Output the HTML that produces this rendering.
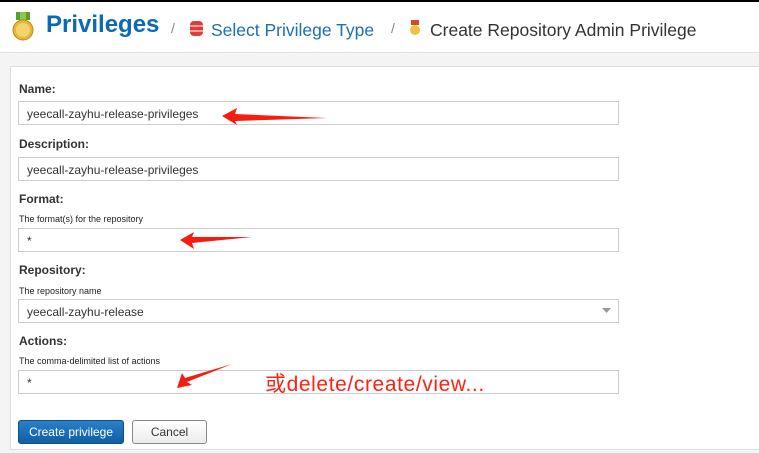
<!DOCTYPE html>
<html><head><meta charset="utf-8"><style>
body{margin:0;width:759px;height:453px;overflow:hidden;background:#f4f4f4;font-family:"Liberation Sans",sans-serif;position:relative}
.hdr{position:absolute;left:0;top:0;width:759px;height:53px;background:#fff;border-top:2px solid #000;box-sizing:border-box;border-bottom:1px solid #ddd}
.a{position:absolute;white-space:nowrap}
.panel{position:absolute;left:10px;top:66px;width:760px;height:384px;background:#fff;border:1px solid #ddd;box-sizing:border-box}
.lbl{position:absolute;left:19px;font-size:12px;font-weight:bold;color:#333}
.help{position:absolute;left:19px;font-size:9px;color:#222}
.in{position:absolute;left:18px;width:601px;height:24px;border:1px solid #ccc;box-sizing:border-box;font-size:12px;color:#333;padding:5px 0 0 8px}
.btn{position:absolute;top:420px;height:24px;box-sizing:border-box;border-radius:3px;font-size:12px;text-align:center;line-height:22px}
</style></head><body>
<div class="hdr"></div>
<svg class="a" style="left:10px;top:10px" width="26" height="32" viewBox="0 0 26 32"><rect x="6" y="2" width="14" height="8" fill="#5a9e2a"/><rect x="10" y="2" width="6" height="8" fill="#8cc850"/><circle cx="13" cy="20" r="10" fill="#e6b73c" stroke="#b8871e"/><circle cx="13" cy="20" r="7" fill="#f3d36a"/></svg>
<div class="a" style="left:46px;top:11px;font-size:24px;font-weight:bold;color:#0b69b7">Privileges</div>
<div class="a" style="left:171px;top:20px;font-size:14px;color:#888">/</div>
<svg class="a" style="left:189px;top:20px" width="16" height="17" viewBox="0 0 16 17"><rect x="1" y="1" width="13" height="15" rx="4" fill="#d9403a"/><path d="M1 6h13M1 11h13" stroke="#fff" stroke-width="1"/></svg>
<div class="a" style="left:211px;top:20px;font-size:17.5px;color:#1a6fb5">Select Privilege Type</div>
<div class="a" style="left:391px;top:20px;font-size:14px;color:#888">/</div>
<svg class="a" style="left:409px;top:19px" width="12" height="17" viewBox="0 0 12 17"><rect x="2" y="1" width="8" height="5" fill="#d9481f"/><circle cx="6" cy="11" r="5" fill="#f0c040"/></svg>
<div class="a" style="left:430px;top:20px;font-size:17.5px;color:#333">Create Repository Admin Privilege</div>
<div class="panel"></div>
<div class="lbl" style="top:82px">Name:</div>
<div class="in" style="top:101px">yeecall-zayhu-release-privileges</div>
<div class="lbl" style="top:137px">Description:</div>
<div class="in" style="top:157px">yeecall-zayhu-release-privileges</div>
<div class="lbl" style="top:192px">Format:</div>
<div class="help" style="top:214px">The format(s) for the repository</div>
<div class="in" style="top:228px">*</div>
<div class="lbl" style="top:263px">Repository:</div>
<div class="help" style="top:286px">The repository name</div>
<div class="in" style="top:299px">yeecall-zayhu-release</div>
<svg class="a" style="left:602px;top:308px" width="10" height="6"><path d="M0 0h9L4.5 5z" fill="#999"/></svg>
<div class="lbl" style="top:334px">Actions:</div>
<div class="help" style="top:356px">The comma-delimited list of actions</div>
<div class="in" style="top:370px">*</div>
<div class="a" style="left:265px;top:368px;font-size:21px;letter-spacing:0.6px;color:#f21;font-family:'Liberation Sans','Noto Sans CJK SC',sans-serif">或delete/create/view...</div>
<svg class="a" style="left:0;top:0" width="759" height="453"><g fill="#f41d10">
<path d="M222 116L237 108L235 114L327 118L235 121L237 125Z"/>
<path d="M180 240L194 232L192 237L252 237L192 243L194 249Z"/>
<path d="M177 388L182 373L185 378L232 364L187 382L192 385Z"/></g></svg>
<div class="btn" style="left:18px;width:106px;background:linear-gradient(#2a7fc8,#0f5fa5);border:1px solid #0b4f8c;color:#fff">Create privilege</div>
<div class="btn" style="left:132px;width:75px;background:linear-gradient(#fff,#ececec);border:1px solid #888;color:#333">Cancel</div>
</body></html>
